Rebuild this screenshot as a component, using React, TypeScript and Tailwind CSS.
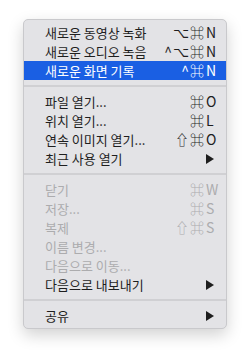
import React from "react";

type Item =
  | { sep: true }
  | {
      sep?: false;
      label: string;
      mods?: string;
      keyChar?: string;
      submenu?: boolean;
      disabled?: boolean;
      active?: boolean;
    };

const items: Item[] = [
  { label: "새로운 동영상 녹화", mods: "⌥⌘", keyChar: "N" },
  { label: "새로운 오디오 녹음", mods: "^⌥⌘", keyChar: "N" },
  { label: "새로운 화면 기록", mods: "^⌘", keyChar: "N", active: true },
  { sep: true },
  { label: "파일 열기...", mods: "⌘", keyChar: "O" },
  { label: "위치 열기...", mods: "⌘", keyChar: "L" },
  { label: "연속 이미지 열기...", mods: "⇧⌘", keyChar: "O" },
  { label: "최근 사용 열기", submenu: true },
  { sep: true },
  { label: "닫기", mods: "⌘", keyChar: "W", disabled: true },
  { label: "저장...", mods: "⌘", keyChar: "S", disabled: true },
  { label: "복제", mods: "⇧⌘", keyChar: "S", disabled: true },
  { label: "이름 변경...", disabled: true },
  { label: "다음으로 이동...", disabled: true },
  { label: "다음으로 내보내기", submenu: true },
  { sep: true },
  { label: "공유", submenu: true },
];

// Small filled triangle for submenu rows
const Arrow = () => (
  <svg width="8" height="10" viewBox="0 0 8 10" className="block">
    <path d="M0 0 L8 5 L0 10 Z" fill="currentColor" />
  </svg>
);

const MenuRow: React.FC<{ item: Exclude<Item, { sep: true }> }> = ({ item }) => {
  const color = item.active
    ? "bg-[#1a5fe3] text-white"
    : item.disabled
    ? "text-[#acacae]"
    : "text-[#1e1e1e]";
  return (
    <div className={`flex items-center h-[19px] pl-[21px] pr-[7px] ${color}`}>
      <span className="flex-1 whitespace-nowrap text-[13px]">{item.label}</span>
      {item.keyChar && (
        <div className="flex items-center text-[14px]">
          <span className="text-right tracking-[1px]">{item.mods}</span>
          <span className="w-[14px] pl-[1px]">{item.keyChar}</span>
        </div>
      )}
      {item.submenu && (
        <div className="w-[14px] flex justify-start pl-[1px]">
          <Arrow />
        </div>
      )}
    </div>
  );
};

export default function App() {
  return (
    <div className="w-[250px] h-[356px] bg-white pt-[19px] pl-[23px]">
      <div
        className="w-[204px] rounded-[5px] bg-[#e3e3e6] border border-[#c9c9cc] py-[3px] shadow-[0_6px_16px_rgba(0,0,0,0.18)] leading-[19px]"
        style={{ fontFamily: '"Noto Sans CJK KR", "Liberation Sans", sans-serif' }}
      >
        {items.map((item, i) =>
          item.sep ? (
            <div key={i} className="h-[12px] flex items-center">
              <div className="w-full h-[2px] bg-[#d0d0d3]" />
            </div>
          ) : (
            <MenuRow key={i} item={item} />
          )
        )}
      </div>
    </div>
  );
}
